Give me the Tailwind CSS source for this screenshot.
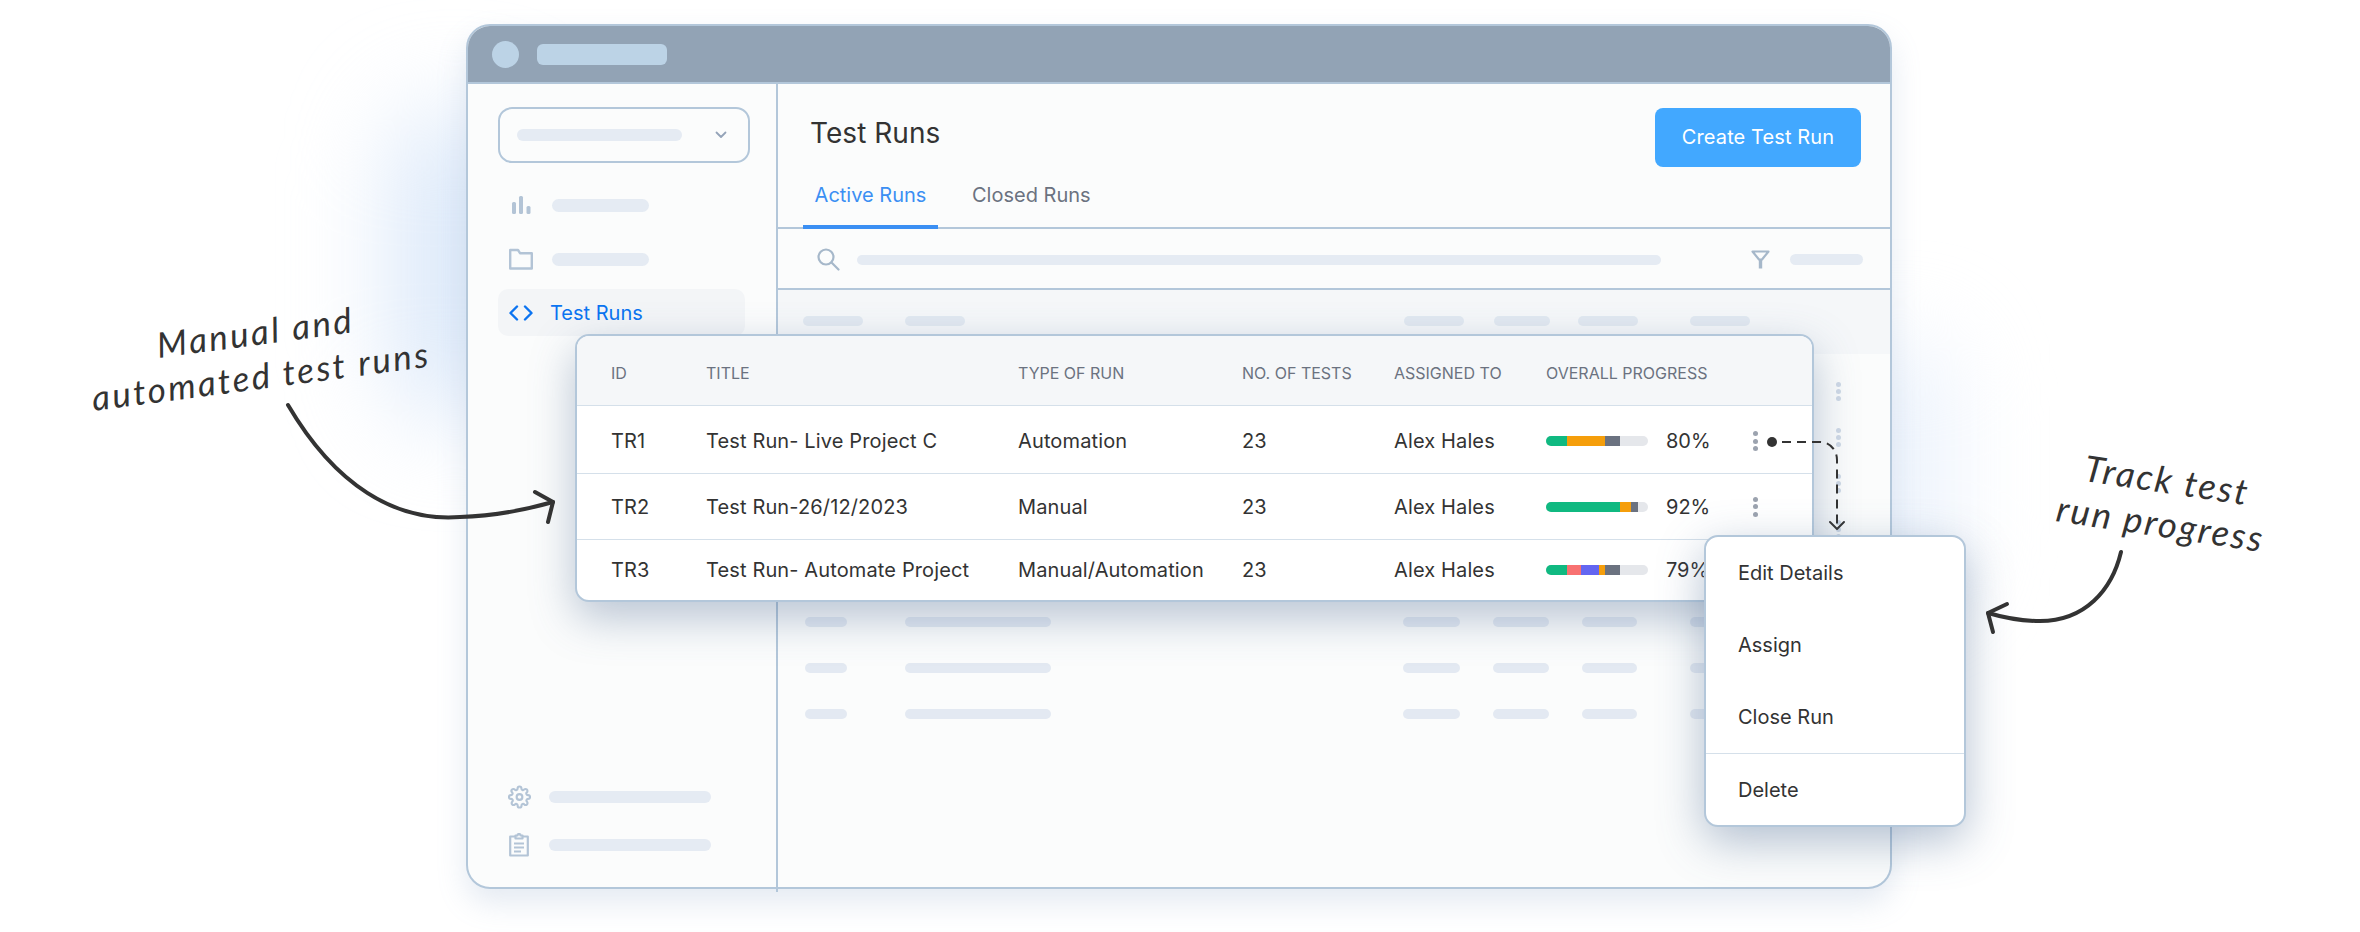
<!DOCTYPE html>
<html lang="en">
<head>
    <meta charset="UTF-8">
    <meta name="viewport" content="width=device-width, initial-scale=1.0">
    <title>Test Runs</title>
    <script src="https://cdn.jsdelivr.net/npm/@tailwindcss/browser@4"></script>
</head>
<body class="bg-white font-['Inter',sans-serif] text-[#333333]">
<div class="relative w-[2360px] h-[932px] overflow-hidden pt-[24px] pl-[466px]">

    <!-- Glow behind the window -->
    <div class="absolute left-[395px] top-[110px] w-[120px] h-[310px] rounded-full bg-[#d9e7f9] blur-[50px]"></div>
    <div class="absolute left-[1850px] top-[340px] w-[100px] h-[260px] rounded-full bg-[#ebf2fc] blur-[45px]"></div>

    <!-- App window -->
    <div class="relative w-[1426px] h-[865px] flex flex-col bg-[#fbfcfc] border-2 border-[#b3c7da] rounded-[24px] overflow-hidden shadow-[0_14px_30px_rgba(120,150,190,0.2)]">
        <div class="h-[58px] shrink-0 bg-[#92a3b5] border-b-2 border-[#b3c7da] flex items-center pl-[24px]">
            <div class="w-[27px] h-[27px] rounded-full bg-[#bcd3e6]"></div>
            <div class="ml-[18px] w-[130px] h-[21px] rounded-[6px] bg-[#bcd3e6]"></div>
        </div>

        <div class="flex flex-1 min-h-0">
            <!-- Sidebar -->
            <aside class="w-[310px] shrink-0 border-r-2 border-[#b3c7da] pl-[30px] pt-[23px] pb-[30px] flex flex-col">
                <div class="w-[252px] h-[56px] border-2 border-[#b3c7da] rounded-[14px] flex items-center pl-[17px] pr-[21px] justify-between">
                    <div class="w-[165px] h-[12px] rounded-full bg-[#e5ebf3]"></div>
                    <svg width="12" height="8" viewBox="0 0 12 8" fill="none" stroke="#94a3b8" stroke-width="1.8" stroke-linecap="round" stroke-linejoin="round"><path d="M1.5 1.5 6 6l4.5-4.5"/></svg>
                </div>

                <div class="flex items-center h-[54px] mt-[15px] w-[247px]">
                    <svg class="ml-[11px] w-[24px]" height="20" viewBox="0 0 24 20" fill="#b3c4d6"><rect x="3" y="7" width="4" height="12" rx="1.5"/><rect x="10" y="1" width="4" height="18" rx="1.5"/><rect x="17.5" y="11" width="4" height="8" rx="1.5"/></svg>
                    <div class="ml-[19px] w-[97px] h-[13px] rounded-full bg-[#e5ebf3]"></div>
                </div>
                <div class="flex items-center h-[54px] w-[247px]">
                    <svg class="ml-[11px] w-[24px]" height="22" viewBox="0 0 24 22" fill="none" stroke="#b3c4d6" stroke-width="2.4" stroke-linejoin="round"><path d="M1.200 20.500V2h7.800l2 3.200h11.800v15.300z"/></svg>
                    <div class="ml-[19px] w-[97px] h-[13px] rounded-full bg-[#e5ebf3]"></div>
                </div>
                <div class="flex items-center h-[47px] w-[247px] mt-[3px] rounded-[10px] bg-[#f3f5f7]">
                    <svg class="ml-[11px] w-[24px]" height="16" viewBox="0 0 24 16" fill="none" stroke="#0b74f1" stroke-width="2.4" stroke-linecap="round" stroke-linejoin="round"><path d="M8 1.5 1.5 8 8 14.5M16 1.5 22.5 8 16 14.5"/></svg>
                    <span class="ml-[17px] text-[20px] leading-none text-[#0b74f1]">Test Runs</span>
                </div>

                <div class="mt-auto flex flex-col gap-[24px]">
                    <div class="flex items-center h-[24px]">
                        <svg class="ml-[10px]" width="23" height="24" viewBox="0 0 24 24" fill="none" stroke="#b3c4d6" stroke-width="2.2" stroke-linecap="round" stroke-linejoin="round"><circle cx="12" cy="12" r="3"/><path d="M19.4 15a1.65 1.65 0 0 0 .33 1.82l.06.06a2 2 0 1 1-2.83 2.83l-.06-.06a1.65 1.65 0 0 0-2.82 1.17V21a2 2 0 0 1-4 0v-.09a1.65 1.65 0 0 0-2.82-1.2l-.06.06a2 2 0 1 1-2.83-2.83l.06-.06A1.65 1.65 0 0 0 3.26 14H3a2 2 0 0 1 0-4h.09a1.65 1.65 0 0 0 1.2-2.82l-.06-.06a2 2 0 1 1 2.83-2.83l.06.06A1.65 1.65 0 0 0 10 3.26V3a2 2 0 0 1 4 0v.09a1.65 1.65 0 0 0 2.82 1.2l.06-.06a2 2 0 1 1 2.83 2.83l-.06.06A1.65 1.65 0 0 0 20.74 10H21a2 2 0 0 1 0 4h-.09a1.65 1.65 0 0 0-1.51 1z"/></svg>
                        <div class="ml-[18px] w-[162px] h-[12px] rounded-full bg-[#e5ebf3]"></div>
                    </div>
                    <div class="flex items-center h-[24px]">
                        <svg class="ml-[11px]" width="20" height="24" viewBox="0 0 20 24" fill="none" stroke="#b3c4d6" stroke-width="2.2" stroke-linejoin="round"><path d="M6 3.500H1.200v19h17.600v-19H14"/><path d="M6.500 5.500v-3h2a1.500 1.500 0 0 1 3 0h2v3z"/><path d="M5 10.500h10M5 14.500h10M5 18.500h7"/></svg>
                        <div class="ml-[20px] w-[162px] h-[12px] rounded-full bg-[#e5ebf3]"></div>
                    </div>
                </div>
            </aside>

            <!-- Main column -->
            <main class="flex-1 min-w-0 flex flex-col">
                <div class="h-[145px] shrink-0 border-b-2 border-[#b3c7da] flex flex-col justify-between">
                    <div class="flex justify-between items-start pl-[32px] pr-[29px] pt-[24px]">
                        <h1 class="text-[28px] leading-[50px] font-normal tracking-[0.05px] text-[#333333]">Test Runs</h1>
                        <button class="w-[206px] h-[59px] pb-[2px] rounded-[8px] bg-[#42a8ff] text-white text-[20px] tracking-[0.1px]">Create Test Run</button>
                    </div>
                    <div class="flex pl-[25px] gap-[22px] text-[20px] leading-none">
                        <div class="w-[135px] h-[44px] -mb-[2px] text-center text-[#3b8ff3] border-b-[4px] border-[#3b8ff3]">Active Runs</div>
                        <div class="px-[12px] h-[42px] text-[#6b7280]">Closed Runs</div>
                    </div>
                </div>

                <div class="h-[61px] pt-[2px] shrink-0 border-b-2 border-[#b3c7da] flex items-center">
                    <svg class="ml-[39px]" width="23" height="23" viewBox="0 0 23 23" fill="none" stroke="#a6b8ca" stroke-width="2.200" stroke-linecap="round"><circle cx="9" cy="9" r="7.500"/><path d="m14.500 14.500 7 7"/></svg>
                    <div class="ml-[17px] w-[804px] h-[10px] rounded-full bg-[#e5ebf3]"></div>
                    <svg class="ml-[90px]" width="19" height="19" viewBox="0 0 19 19" fill="none" stroke="#a6b8ca" stroke-linejoin="round"><path d="M1.500 1.500h16L11 9.500H8z" stroke-width="2.200"/><path d="M9.500 9v9.500" stroke-width="3.400"/></svg>
                    <div class="ml-[20px] w-[73px] h-[11px] rounded-full bg-[#e5ebf3]"></div>
                </div>

                <!-- Skeleton table behind the floating card -->
                <div class="h-[64px] shrink-0 bg-[#f5f7f9] relative">
                    <div class="grid grid-cols-[102px_499px_90px_84px_112px_60px] pl-[25px] pt-[26px]">
                        <div class="w-[60px] h-[10px] rounded-full bg-[#e2e9f1]"></div>
                        <div class="w-[60px] h-[10px] rounded-full bg-[#e2e9f1]"></div>
                        <div class="w-[60px] h-[10px] rounded-full bg-[#e2e9f1]"></div>
                        <div class="w-[56px] h-[10px] rounded-full bg-[#e2e9f1]"></div>
                        <div class="w-[60px] h-[10px] rounded-full bg-[#e2e9f1]"></div>
                        <div class="w-[60px] h-[10px] rounded-full bg-[#e2e9f1]"></div>
                    </div>
                </div>
                <div id="skeletonRows" class="pt-[14px]">
                    <div class="h-[46.2px] flex items-center pl-[27px]"><div class="w-[42px] h-[10px] rounded-full bg-[#e3e9f2]"></div><div class="ml-[58px] w-[146px] h-[10px] rounded-full bg-[#e3e9f2]"></div><div class="ml-[352px] w-[57px] h-[10px] rounded-full bg-[#e3e9f2]"></div><div class="ml-[33px] w-[56px] h-[10px] rounded-full bg-[#e3e9f2]"></div><div class="ml-[33px] w-[55px] h-[10px] rounded-full bg-[#e3e9f2]"></div><div class="ml-[53px] w-[60px] h-[10px] rounded-full bg-[#e3e9f2]"></div><div class="ml-[86px] flex flex-col gap-[2px]"><i class="block w-[5px] h-[5px] rounded-full bg-[#cfd9e6]"></i><i class="block w-[5px] h-[5px] rounded-full bg-[#cfd9e6]"></i><i class="block w-[5px] h-[5px] rounded-full bg-[#cfd9e6]"></i></div></div>
                    <div class="h-[46.2px] flex items-center pl-[27px]"><div class="w-[42px] h-[10px] rounded-full bg-[#e3e9f2]"></div><div class="ml-[58px] w-[146px] h-[10px] rounded-full bg-[#e3e9f2]"></div><div class="ml-[352px] w-[57px] h-[10px] rounded-full bg-[#e3e9f2]"></div><div class="ml-[33px] w-[56px] h-[10px] rounded-full bg-[#e3e9f2]"></div><div class="ml-[33px] w-[55px] h-[10px] rounded-full bg-[#e3e9f2]"></div><div class="ml-[53px] w-[60px] h-[10px] rounded-full bg-[#e3e9f2]"></div><div class="ml-[86px] flex flex-col gap-[2px]"><i class="block w-[5px] h-[5px] rounded-full bg-[#cfd9e6]"></i><i class="block w-[5px] h-[5px] rounded-full bg-[#cfd9e6]"></i><i class="block w-[5px] h-[5px] rounded-full bg-[#cfd9e6]"></i></div></div>
                    <div class="h-[46.2px] flex items-center pl-[27px]"><div class="w-[42px] h-[10px] rounded-full bg-[#e3e9f2]"></div><div class="ml-[58px] w-[146px] h-[10px] rounded-full bg-[#e3e9f2]"></div><div class="ml-[352px] w-[57px] h-[10px] rounded-full bg-[#e3e9f2]"></div><div class="ml-[33px] w-[56px] h-[10px] rounded-full bg-[#e3e9f2]"></div><div class="ml-[33px] w-[55px] h-[10px] rounded-full bg-[#e3e9f2]"></div><div class="ml-[53px] w-[60px] h-[10px] rounded-full bg-[#e3e9f2]"></div><div class="ml-[86px] flex flex-col gap-[2px]"><i class="block w-[5px] h-[5px] rounded-full bg-[#cfd9e6]"></i><i class="block w-[5px] h-[5px] rounded-full bg-[#cfd9e6]"></i><i class="block w-[5px] h-[5px] rounded-full bg-[#cfd9e6]"></i></div></div>
                    <div class="h-[46.2px] flex items-center pl-[27px]"><div class="w-[42px] h-[10px] rounded-full bg-[#e3e9f2]"></div><div class="ml-[58px] w-[146px] h-[10px] rounded-full bg-[#e3e9f2]"></div><div class="ml-[352px] w-[57px] h-[10px] rounded-full bg-[#e3e9f2]"></div><div class="ml-[33px] w-[56px] h-[10px] rounded-full bg-[#e3e9f2]"></div><div class="ml-[33px] w-[55px] h-[10px] rounded-full bg-[#e3e9f2]"></div><div class="ml-[53px] w-[60px] h-[10px] rounded-full bg-[#e3e9f2]"></div><div class="ml-[86px] flex flex-col gap-[2px]"><i class="block w-[5px] h-[5px] rounded-full bg-[#cfd9e6]"></i><i class="block w-[5px] h-[5px] rounded-full bg-[#cfd9e6]"></i><i class="block w-[5px] h-[5px] rounded-full bg-[#cfd9e6]"></i></div></div>
                    <div class="h-[46.2px] flex items-center pl-[27px]"><div class="w-[42px] h-[10px] rounded-full bg-[#e3e9f2]"></div><div class="ml-[58px] w-[146px] h-[10px] rounded-full bg-[#e3e9f2]"></div><div class="ml-[352px] w-[57px] h-[10px] rounded-full bg-[#e3e9f2]"></div><div class="ml-[33px] w-[56px] h-[10px] rounded-full bg-[#e3e9f2]"></div><div class="ml-[33px] w-[55px] h-[10px] rounded-full bg-[#e3e9f2]"></div><div class="ml-[53px] w-[60px] h-[10px] rounded-full bg-[#e3e9f2]"></div></div>
                    <div class="h-[46.2px] flex items-center pl-[27px]"><div class="w-[42px] h-[10px] rounded-full bg-[#e3e9f2]"></div><div class="ml-[58px] w-[146px] h-[10px] rounded-full bg-[#e3e9f2]"></div><div class="ml-[352px] w-[57px] h-[10px] rounded-full bg-[#e3e9f2]"></div><div class="ml-[33px] w-[56px] h-[10px] rounded-full bg-[#e3e9f2]"></div><div class="ml-[33px] w-[55px] h-[10px] rounded-full bg-[#e3e9f2]"></div><div class="ml-[53px] w-[60px] h-[10px] rounded-full bg-[#e3e9f2]"></div></div>
                    <div class="h-[46.2px] flex items-center pl-[27px]"><div class="w-[42px] h-[10px] rounded-full bg-[#e3e9f2]"></div><div class="ml-[58px] w-[146px] h-[10px] rounded-full bg-[#e3e9f2]"></div><div class="ml-[352px] w-[57px] h-[10px] rounded-full bg-[#e3e9f2]"></div><div class="ml-[33px] w-[56px] h-[10px] rounded-full bg-[#e3e9f2]"></div><div class="ml-[33px] w-[55px] h-[10px] rounded-full bg-[#e3e9f2]"></div><div class="ml-[53px] w-[60px] h-[10px] rounded-full bg-[#e3e9f2]"></div></div>
                    <div class="h-[46.2px] flex items-center pl-[27px]"><div class="w-[42px] h-[10px] rounded-full bg-[#e3e9f2]"></div><div class="ml-[58px] w-[146px] h-[10px] rounded-full bg-[#e3e9f2]"></div><div class="ml-[352px] w-[57px] h-[10px] rounded-full bg-[#e3e9f2]"></div><div class="ml-[33px] w-[56px] h-[10px] rounded-full bg-[#e3e9f2]"></div><div class="ml-[33px] w-[55px] h-[10px] rounded-full bg-[#e3e9f2]"></div><div class="ml-[53px] w-[60px] h-[10px] rounded-full bg-[#e3e9f2]"></div></div>
                </div>
            </main>
        </div>
    </div>
    <!-- Sidebar rule pokes out under the window -->
    <div class="absolute left-[776px] top-[888px] w-[2px] h-[4px] bg-[#b3c7da]"></div>

    <!-- Floating runs card -->
    <div class="absolute left-[575px] top-[334px] w-[1239px] h-[268px] bg-white border-2 border-[#b3c7da] rounded-[14px] overflow-hidden shadow-[0_16px_44px_rgba(75,105,145,0.38)] text-[20px] leading-none tracking-[0.13px]">
        <div class="grid grid-cols-[95px_312px_224px_152px_152px_1fr] items-center pl-[34px] pt-[4px] h-[70px] bg-[#f5f7f9] border-b-[1.5px] border-[#d5e0ea] text-[16px] text-[#6b7280] tracking-normal">
            <div>ID</div><div>TITLE</div><div>TYPE OF RUN</div><div>NO. OF TESTS</div><div>ASSIGNED TO</div><div>OVERALL PROGRESS</div>
        </div>
        <div class="grid grid-cols-[95px_312px_224px_152px_152px_1fr] items-center pl-[34px] pt-[3px] h-[68px] border-b-[1.5px] border-[#d5e0ea]">
            <div>TR1</div><div>Test Run- Live Project C</div><div>Automation</div><div>23</div><div>Alex Hales</div>
            <div class="flex items-center">
                <div class="w-[102px] h-[10px] rounded-full bg-[#e5e7eb] overflow-hidden flex shrink-0">
                    <div class="bg-[#10b981]" style="width:20.500px"></div><div class="bg-[#f59e0b]" style="width:38.500px"></div><div class="bg-[#6b7280]" style="width:15px"></div>
                </div>
                <div class="ml-[18px] w-[87px] shrink-0 tracking-normal">80%</div>
                <div class="flex flex-col gap-[2.500px]"><i class="block w-[5px] h-[5px] rounded-full bg-[#9ca3af]"></i><i class="block w-[5px] h-[5px] rounded-full bg-[#9ca3af]"></i><i class="block w-[5px] h-[5px] rounded-full bg-[#9ca3af]"></i></div>
            </div>
        </div>
        <div class="grid grid-cols-[95px_312px_224px_152px_152px_1fr] items-center pl-[34px] h-[66px] border-b-[1.5px] border-[#d5e0ea]">
            <div>TR2</div><div>Test Run-26/12/2023</div><div>Manual</div><div>23</div><div>Alex Hales</div>
            <div class="flex items-center">
                <div class="w-[102px] h-[10px] rounded-full bg-[#e5e7eb] overflow-hidden flex shrink-0">
                    <div class="bg-[#10b981]" style="width:74px"></div><div class="bg-[#f59e0b]" style="width:11px"></div><div class="bg-[#6b7280]" style="width:7px"></div>
                </div>
                <div class="ml-[18px] w-[87px] shrink-0 tracking-normal">92%</div>
                <div class="flex flex-col gap-[2.500px]"><i class="block w-[5px] h-[5px] rounded-full bg-[#9ca3af]"></i><i class="block w-[5px] h-[5px] rounded-full bg-[#9ca3af]"></i><i class="block w-[5px] h-[5px] rounded-full bg-[#9ca3af]"></i></div>
            </div>
        </div>
        <div class="grid grid-cols-[95px_312px_224px_152px_152px_1fr] items-center pl-[34px] h-[60px]">
            <div>TR3</div><div>Test Run- Automate Project</div><div>Manual/Automation</div><div>23</div><div>Alex Hales</div>
            <div class="flex items-center">
                <div class="w-[102px] h-[10px] rounded-full bg-[#e5e7eb] overflow-hidden flex shrink-0">
                    <div class="bg-[#10b981]" style="width:20.500px"></div><div class="bg-[#f87171]" style="width:14.500px"></div><div class="bg-[#6366f1]" style="width:18px"></div><div class="bg-[#f59e0b]" style="width:6px"></div><div class="bg-[#6b7280]" style="width:15px"></div>
                </div>
                <div class="ml-[18px] w-[87px] shrink-0 tracking-normal">79%</div>
            </div>
        </div>
    </div>

    <!-- Connector from the row menu to the popup -->
    <svg class="absolute left-[1760px] top-[430px]" width="100" height="110" viewBox="1760 430 100 110" fill="none" stroke="#333333" stroke-width="2">
        <circle cx="1772" cy="442" r="5" fill="#333333" stroke="none"/>
        <path d="M1782 442h38c10 0 17 8 17 18v68" stroke-dasharray="9 6"/>
        <path d="m1830 522 7 7 7-7" stroke-linecap="round" stroke-linejoin="round"/>
    </svg>

    <!-- Row actions popup -->
    <div class="absolute left-[1704px] top-[535px] w-[262px] h-[292px] bg-white border-2 border-[#b3c7da] rounded-[14px] shadow-[0_14px_46px_rgba(75,105,145,0.42)] text-[20px] leading-none">
        <div class="h-[217px] border-b-[1.5px] border-[#d5e0ea] pl-[32px] pt-[12px]">
            <div class="h-[48px] flex items-center">Edit Details</div>
            <div class="h-[24px]"></div>
            <div class="h-[48px] flex items-center">Assign</div>
            <div class="h-[24px]"></div>
            <div class="h-[48px] flex items-center">Close Run</div>
        </div>
        <div class="h-[71px] flex items-center pl-[32px]">Delete</div>
    </div>

    <!-- Handwritten notes -->
    <div class="absolute left-[73px] top-[309px] w-[370px] text-center text-[#333333] font-['Lato',sans-serif] italic text-[35px] leading-[44px] tracking-[2.5px] -rotate-[7.5deg]">Manual and<br>automated test runs</div>
    <svg class="absolute left-0 top-0" width="2360" height="932" fill="none" stroke="#333333" stroke-width="4" stroke-linecap="round" stroke-linejoin="round">
        <path d="M288 405C335 485 395 522 460 517C495 516 525 510 553 502"/>
        <path d="m535 492 18 10-5 20"/>
        <path d="M2121 552C2112 590 2085 621 2040 621C2020 621 2005 618 1988 613"/>
        <path d="m2007 604-19 9 5 19"/>
    </svg>
    <div class="absolute left-[2034px] top-[457px] w-[260px] text-center text-[#333333] font-['Lato',sans-serif] italic text-[36px] leading-[44px] tracking-[2.2px] rotate-[8.5deg]">Track test<br>run progress</div>
</div>
</body>
</html>
